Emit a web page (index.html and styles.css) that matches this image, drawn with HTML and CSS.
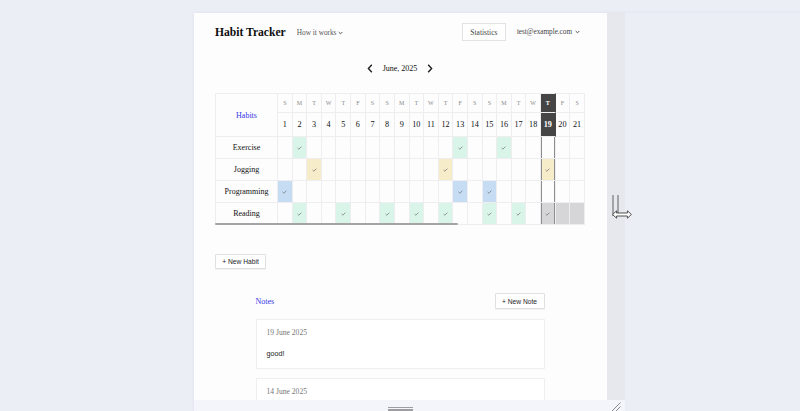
FILE: index.html
```html
<!DOCTYPE html>
<html>
<head>
<meta charset="utf-8">
<title>Habit Tracker</title>
<link rel="stylesheet" href="styles.css">
</head>
<body>
<div class="device">
  <div class="viewport">
    <header class="topbar">
      <div class="brand">Habit Tracker</div>
      <div class="menu">How it works <svg class="caret" viewBox="0 0 6 4"><path d="M0.8 0.8 3 3 5.2 0.8"/></svg></div>
      <div class="spacer"></div>
      <button class="stats">Statistics</button>
      <div class="user">test@example.com <svg class="caret" viewBox="0 0 6 4"><path d="M0.8 0.8 3 3 5.2 0.8"/></svg></div>
    </header>

    <div class="month">
      <svg class="nav" viewBox="0 0 6 9"><path d="M4.8 0.8 1.4 4.5 4.8 8.2"/></svg>
      <span class="month-label">June, 2025</span>
      <svg class="nav" viewBox="0 0 6 9"><path d="M1.2 0.8 4.6 4.5 1.2 8.2"/></svg>
    </div>

    <div class="grid-wrap">
      <table class="habits">
        <colgroup>
          <col class="c-name">
          <col><col><col><col><col><col><col><col><col><col><col><col><col><col><col><col><col><col><col><col><col>
        </colgroup>
        <tr class="letters">
          <th rowspan="2" class="hname">Habits</th>
          <td>S</td><td>M</td><td>T</td><td>W</td><td>T</td><td>F</td><td>S</td><td>S</td><td>M</td><td>T</td><td>W</td><td>T</td><td>F</td><td>S</td><td>S</td><td>M</td><td>T</td><td>W</td><td class="today-h">T</td><td>F</td><td>S</td>
        </tr>
        <tr class="nums">
          <td>1</td><td>2</td><td>3</td><td>4</td><td>5</td><td>6</td><td>7</td><td>8</td><td>9</td><td>10</td><td>11</td><td>12</td><td>13</td><td>14</td><td>15</td><td>16</td><td>17</td><td>18</td><td class="today-h">19</td><td>20</td><td>21</td>
        </tr>
        <tr class="row">
          <th class="name">Exercise</th>
          <td></td><td class="g"><svg class="ck" viewBox="0 0 6 5"><path d="M0.6 2.5 2.2 4 5.4 0.8"/></svg></td><td></td><td></td><td></td><td></td><td></td><td></td><td></td><td></td><td></td><td></td><td class="g"><svg class="ck" viewBox="0 0 6 5"><path d="M0.6 2.5 2.2 4 5.4 0.8"/></svg></td><td></td><td></td><td class="g"><svg class="ck" viewBox="0 0 6 5"><path d="M0.6 2.5 2.2 4 5.4 0.8"/></svg></td><td></td><td></td><td class="today"></td><td></td><td></td>
        </tr>
        <tr class="row">
          <th class="name">Jogging</th>
          <td></td><td></td><td class="y"><svg class="ck" viewBox="0 0 6 5"><path d="M0.6 2.5 2.2 4 5.4 0.8"/></svg></td><td></td><td></td><td></td><td></td><td></td><td></td><td></td><td></td><td class="y"><svg class="ck" viewBox="0 0 6 5"><path d="M0.6 2.5 2.2 4 5.4 0.8"/></svg></td><td></td><td></td><td></td><td></td><td></td><td></td><td class="today y"><svg class="ck" viewBox="0 0 6 5"><path d="M0.6 2.5 2.2 4 5.4 0.8"/></svg></td><td></td><td></td>
        </tr>
        <tr class="row">
          <th class="name">Programming</th>
          <td class="b"><svg class="ck" viewBox="0 0 6 5"><path d="M0.6 2.5 2.2 4 5.4 0.8"/></svg></td><td></td><td></td><td></td><td></td><td></td><td></td><td></td><td></td><td></td><td></td><td></td><td class="b"><svg class="ck" viewBox="0 0 6 5"><path d="M0.6 2.5 2.2 4 5.4 0.8"/></svg></td><td></td><td class="b"><svg class="ck" viewBox="0 0 6 5"><path d="M0.6 2.5 2.2 4 5.4 0.8"/></svg></td><td></td><td></td><td></td><td class="today"></td><td></td><td></td>
        </tr>
        <tr class="row last">
          <th class="name">Reading</th>
          <td></td><td class="g"><svg class="ck" viewBox="0 0 6 5"><path d="M0.6 2.5 2.2 4 5.4 0.8"/></svg></td><td></td><td></td><td class="g"><svg class="ck" viewBox="0 0 6 5"><path d="M0.6 2.5 2.2 4 5.4 0.8"/></svg></td><td></td><td></td><td class="g"><svg class="ck" viewBox="0 0 6 5"><path d="M0.6 2.5 2.2 4 5.4 0.8"/></svg></td><td></td><td class="g"><svg class="ck" viewBox="0 0 6 5"><path d="M0.6 2.5 2.2 4 5.4 0.8"/></svg></td><td></td><td class="g"><svg class="ck" viewBox="0 0 6 5"><path d="M0.6 2.5 2.2 4 5.4 0.8"/></svg></td><td></td><td></td><td class="g"><svg class="ck" viewBox="0 0 6 5"><path d="M0.6 2.5 2.2 4 5.4 0.8"/></svg></td><td></td><td class="g"><svg class="ck" viewBox="0 0 6 5"><path d="M0.6 2.5 2.2 4 5.4 0.8"/></svg></td><td></td><td class="today k"><svg class="ck" viewBox="0 0 6 5"><path d="M0.6 2.5 2.2 4 5.4 0.8"/></svg></td><td class="k"></td><td class="k"></td>
        </tr>
      </table>
      <div class="thumb"></div>
    </div>

    <button class="btn new-habit">+ New Habit</button>

    <section class="notes">
      <div class="notes-head">
        <span class="notes-title">Notes</span>
        <button class="btn new-note">+ New Note</button>
      </div>
      <div class="note">
        <div class="note-date">19 June 2025</div>
        <div class="note-text">good!</div>
      </div>
      <div class="note">
        <div class="note-date">14 June 2025</div>
      </div>
    </section>
  </div>

  <div class="rhandle">
    <div class="vgrip"><span></span><span></span></div>
    <svg class="cursor" viewBox="0 0 20 9"><path d="M0.6 4.5 4.6 0.8 V3 H15.4 V0.8 L19.4 4.5 15.4 8.2 V6 H4.6 V8.2 Z"/></svg>
  </div>
  <div class="bgrip"><span></span><span></span></div>
  <div class="bcorner"><svg viewBox="0 0 10 9"><path d="M1 9 9.5 0.5 M5 9 9.5 4.5"/></svg></div>
</div>
</body>
</html>
```
FILE: styles.css
```css
* { box-sizing: border-box; }

html, body {
  margin: 0;
  height: 411px;
  overflow: hidden;
}

body {
  background: #eceef6;
  padding: 13px 0 0 194px;
  font-family: "Liberation Serif", "Times New Roman", serif;
  color: #111;
}

.device {
  display: grid;
  grid-template-columns: 413px 18px;
  grid-template-rows: 387px 11px;
  box-shadow: 0 0 3px rgba(40, 50, 90, 0.08);
}

.viewport {
  background: #fdfdfe;
  overflow: hidden;
  padding: 0 22px 0 21px;
}

/* top bar */
.topbar {
  display: flex;
  align-items: center;
  height: 18px;
  margin-top: 10px;
}
.brand {
  font-size: 11.6px;
  font-weight: bold;
  color: #0d0d0d;
}
.menu {
  margin-left: 11px;
  font-size: 7.3px;
  color: #555;
  display: flex;
  align-items: center;
  gap: 2px;
  padding-top: 1px;
}
.caret {
  width: 5px;
  height: 4px;
  fill: none;
  stroke: #444;
  stroke-width: 1.1;
}
.spacer { flex: 1; }
.stats {
  height: 18px;
  width: 44px;
  padding: 0;
  background: #fff;
  border: 1px solid #e3e3e6;
  font-family: "Liberation Serif", serif;
  font-size: 7.5px;
  color: #444;
}
.user {
  margin-left: 11px;
  padding-right: 5px;
  font-size: 7.2px;
  color: #444;
  display: flex;
  align-items: center;
  gap: 3px;
}

/* month nav */
.month {
  margin-top: 21px;
  height: 12px;
  display: flex;
  justify-content: center;
  align-items: center;
  gap: 9px;
}
.nav {
  width: 6px;
  height: 9px;
  fill: none;
  stroke: #222;
  stroke-width: 1.4;
}
.month-label {
  font-size: 8px;
  color: #111;
  padding: 0 1px;
}

/* habit grid */
.grid-wrap {
  margin-top: 19px;
  width: 370px;
  overflow: hidden;
  position: relative;
}
.habits {
  border-collapse: separate;
  border-spacing: 0;
  table-layout: fixed;
  width: 370px;
  font-size: 8px;
}
.habits col { width: 14.62px; }
.habits col.c-name { width: 63px; }

.habits td, .habits th {
  padding: 0;
  text-align: center;
  vertical-align: middle;
  border-right: 1px solid #eeeef0;
  border-bottom: 1px solid #eeeef0;
  font-weight: normal;
}
.habits tr:first-child td, .habits tr:first-child th { border-top: 1px solid #eeeef0; }
.habits th { border-left: 1px solid #eeeef0; }

.letters { height: 20px; }
.letters td {
  font-size: 6px;
  color: #8a8a8a;
}
.nums { height: 24px; }
.nums td {
  font-size: 8.2px;
  color: #111;
}
.hname {
  color: #3535e8;
  font-size: 8px;
}
.row { height: 22px; }
.name {
  font-size: 8px;
  color: #111;
}

.habits .today-h {
  background: #454545;
  color: #fff;
  font-weight: bold;
  border-right-color: #454545;
}
.habits .today {
  box-shadow: inset 1px 0 #8e8e8e, inset -1px 0 #8e8e8e;
}

.g { background: #d9f5e9; }
.y { background: #f6ecc9; }
.b { background: #c5dcf2; }
.k { background: #d6d6d8; }

.ck {
  display: block;
  margin: 0 auto;
  width: 5px;
  height: 4px;
  fill: none;
  stroke: #6f6f6f;
  stroke-width: 0.9;
}

.thumb {
  position: absolute;
  left: 0;
  bottom: 0;
  width: 243px;
  height: 2px;
  background: #a4a4a6;
  border-radius: 1px;
}

/* buttons */
.btn {
  background: #fff;
  border: 1px solid #e0e0e2;
  border-radius: 1px;
  box-shadow: 0 1px 1px rgba(0, 0, 0, 0.05);
  font-family: "Liberation Sans", Arial, sans-serif;
  font-size: 6.7px;
  color: #1e1e2a;
  padding: 0;
}
.new-habit {
  display: block;
  margin-top: 29px;
  width: 51px;
  height: 15px;
}

/* notes */
.notes {
  width: 289px;
  margin: 24px auto 0;
}
.notes-head {
  display: flex;
  justify-content: space-between;
  align-items: center;
  height: 16px;
}
.notes-title {
  color: #3535e8;
  font-size: 8px;
  padding-top: 1px;
}
.new-note {
  width: 50px;
  height: 16px;
}
.note {
  margin-top: 10px;
  border: 1px solid #efeff2;
  padding: 8px 10px 9px;
  background: #fff;
}
.note + .note { margin-top: 9px; }
.note-date {
  font-size: 7.6px;
  color: #777;
  line-height: 10px;
  margin-bottom: 10px;
}
.note-text {
  font-family: "Liberation Sans", Arial, sans-serif;
  font-size: 7.2px;
  color: #1a1a22;
  line-height: 10px;
  padding-top: 1px;
}

/* responsive frame handles */
.rhandle {
  background: #e7e8ee;
  position: relative;
}
.vgrip {
  display: flex;
  gap: 3.5px;
  margin: 182px 0 0 5px;
}
.vgrip span {
  width: 1.5px;
  height: 21px;
  background: #a3a3a8;
}
.cursor {
  position: absolute;
  left: 5px;
  top: 197px;
  width: 20px;
  height: 9px;
  fill: #fff;
  stroke: #2a2a2a;
  stroke-width: 0.8;
}
.bgrip {
  background: #f4f5fa;
  display: flex;
  flex-direction: column;
  align-items: center;
  padding-top: 7px;
  gap: 1.3px;
}
.bgrip span {
  width: 25px;
  height: 1.2px;
  background: #9d9da2;
}
.bcorner {
  background: #f4f5fa;
  padding: 2px 0 0 4px;
}
.bcorner svg {
  display: block;
  width: 10px;
  height: 9px;
  fill: none;
  stroke: #8a8a90;
  stroke-width: 1;
}
```
